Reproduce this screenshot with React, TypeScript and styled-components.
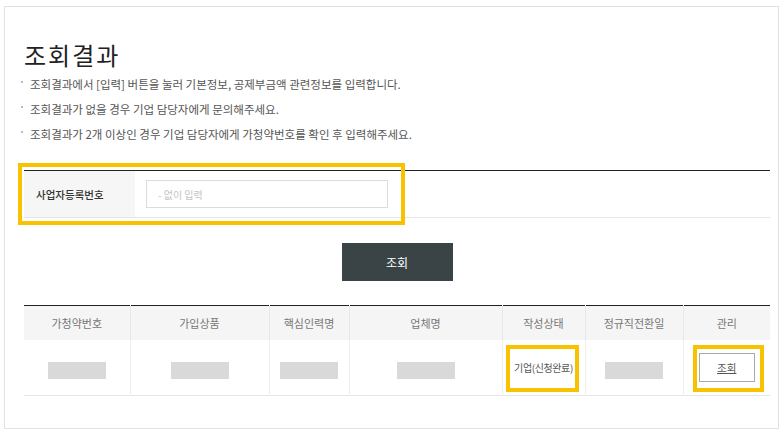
import styled, { createGlobalStyle } from 'styled-components'

const GlobalStyle = createGlobalStyle`
  html, body {
    margin: 0;
    padding: 0;
    background: #ffffff;
  }
  body {
    font-family: "Noto Sans CJK KR", "Noto Sans", sans-serif;
    color: #333;
  }
`

const Panel = styled.div`
  margin: 6px 5px 0 4px;
  height: 423px;
  box-sizing: border-box;
  border: 1px solid #e2e2e2;
  padding: 34px 8px 0 19px;
`

const Title = styled.h2`
  margin: 0;
  font-size: 24px;
  font-weight: 400;
  line-height: 28px;
  color: #222;
  letter-spacing: 2px;
`

const Notes = styled.ul`
  list-style: none;
  margin: 3px 0 0 0;
  padding: 0;
`

const Note = styled.li`
  position: relative;
  padding-left: 6px;
  font-size: 11.5px;
  line-height: 25px;
  color: #555;
  letter-spacing: 0;

  &::before {
    content: '';
    position: absolute;
    left: -3px;
    top: 9px;
    width: 2px;
    height: 2px;
    background: #bbb;
  }
`

const SearchWrap = styled.div`
  position: relative;
  margin-top: 23px;
  border-top: 1px solid #222;
  border-bottom: 1px solid #e6e6e6;
  display: flex;
  height: 46px;
`

const SearchLabel = styled.div`
  width: 111px;
  background: #f6f6f6;
  display: flex;
  align-items: center;
  padding-left: 12px;
  box-sizing: border-box;
  font-size: 10.5px;
  font-weight: 500;
  color: #333;
`

const SearchField = styled.div`
  display: flex;
  align-items: center;
  padding-left: 11px;
`

const Input = styled.input`
  width: 242px;
  height: 28px;
  box-sizing: border-box;
  border: 1px solid #dcdcdc;
  padding: 0 11px;
  font-family: inherit;
  font-size: 10px;
  outline: none;

  &::placeholder {
    color: #c4c4c4;
  }
`

const Highlight = styled.div<{ $t: number; $r: number; $b: number; $l: number }>`
  position: absolute;
  top: ${p => p.$t}px;
  right: ${p => p.$r}px;
  bottom: ${p => p.$b}px;
  left: ${p => p.$l}px;
  border: 4px solid #f8c200;
  pointer-events: none;
`

const ButtonRow = styled.div`
  display: flex;
  justify-content: center;
  margin-top: 25px;
`

const DarkButton = styled.button`
  width: 111px;
  height: 38px;
  border: none;
  background: #3a4447;
  color: #fff;
  font-family: inherit;
  font-size: 12px;
`

const Table = styled.table`
  width: 746px;
  margin-top: 24px;
  border-collapse: collapse;
  table-layout: fixed;
  border-top: 1px solid #222;
  border-bottom: 1px solid #e6e6e6;
`

const Th = styled.th`
  height: 34px;
  background: #f5f5f5;
  font-size: 11px;
  font-weight: 400;
  color: #777;
  border-left: 1px solid #e8e8e8;
  padding: 0;

  &:first-child {
    border-left: none;
  }
`

const Td = styled.td`
  position: relative;
  height: 55px;
  text-align: center;
  font-size: 10px;
  color: #555;
  border-left: 1px solid #eeeeee;
  padding: 0;
  letter-spacing: -0.4px;

  &:first-child {
    border-left: none;
  }
`

const Masked = styled.span`
  display: inline-block;
  vertical-align: middle;
  margin-top: 5px;
  width: 58px;
  height: 17px;
  background: #d9d9d9;
`

const SmallButton = styled.button`
  width: 56px;
  height: 29px;
  box-sizing: border-box;
  border: 1px solid #aaa;
  background: #fff;
  font-family: inherit;
  font-size: 10.5px;
  color: #555;
  text-decoration: underline;
  vertical-align: middle;
`

const widths = [106, 139, 80, 153, 83, 98, 87]
const heads = ['가청약번호', '가입상품', '핵심인력명', '업체명', '작성상태', '정규직전환일', '관리']

export default function App() {
  return (
    <>
      <GlobalStyle />
      <Panel>
        <Title>조회결과</Title>
        <Notes>
          <Note>조회결과에서 [입력] 버튼을 눌러 기본정보, 공제부금액 관련정보를 입력합니다.</Note>
          <Note>조회결과가 없을 경우 기업 담당자에게 문의해주세요.</Note>
          <Note>조회결과가 2개 이상인 경우 기업 담당자에게 가청약번호를 확인 후 입력해주세요.</Note>
        </Notes>

        <SearchWrap>
          <SearchLabel>사업자등록번호</SearchLabel>
          <SearchField>
            <Input placeholder="- 없이 입력" />
          </SearchField>
          <Highlight $t={-8} $l={-6} $r={365} $b={-8} />
        </SearchWrap>

        <ButtonRow>
          <DarkButton>조회</DarkButton>
        </ButtonRow>

        <Table>
          <colgroup>
            {widths.map((w, i) => (
              <col key={i} style={{ width: w }} />
            ))}
          </colgroup>
          <thead>
            <tr>
              {heads.map(h => (
                <Th key={h}>{h}</Th>
              ))}
            </tr>
          </thead>
          <tbody>
            <tr>
              <Td><Masked /></Td>
              <Td><Masked /></Td>
              <Td><Masked /></Td>
              <Td><Masked /></Td>
              <Td>
                기업(신청완료)
                <Highlight $t={5} $l={3} $r={6} $b={3} />
              </Td>
              <Td><Masked /></Td>
              <Td>
                <SmallButton>조회</SmallButton>
                <Highlight $t={5} $l={9} $r={6} $b={3} />
              </Td>
            </tr>
          </tbody>
        </Table>
      </Panel>
    </>
  )
}
